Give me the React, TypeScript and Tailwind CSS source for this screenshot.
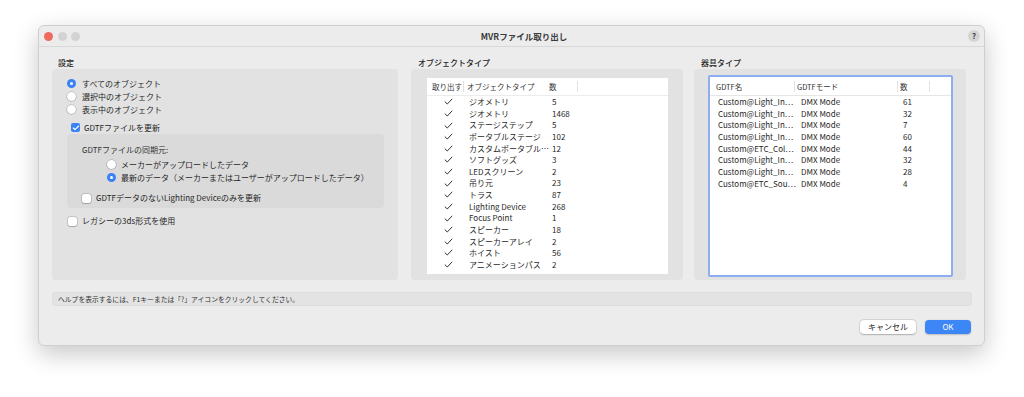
import { Check } from "lucide-react";

const objectTypes: [string, number][] = [
  ["ジオメトリ", 5],
  ["ジオメトリ", 1468],
  ["ステージステップ", 5],
  ["ポータブルステージ", 102],
  ["カスタムポータブル…", 12],
  ["ソフトグッズ", 3],
  ["LEDスクリーン", 2],
  ["吊り元", 23],
  ["トラス", 87],
  ["Lighting Device", 268],
  ["Focus Point", 1],
  ["スピーカー", 18],
  ["スピーカーアレイ", 2],
  ["ホイスト", 56],
  ["アニメーションパス", 2],
];

const fixtures: [string, string, number][] = [
  ["Custom@Light_In…", "DMX Mode", 61],
  ["Custom@Light_In…", "DMX Mode", 32],
  ["Custom@Light_In…", "DMX Mode", 7],
  ["Custom@Light_In…", "DMX Mode", 60],
  ["Custom@ETC_Col…", "DMX Mode", 44],
  ["Custom@Light_In…", "DMX Mode", 32],
  ["Custom@Light_In…", "DMX Mode", 28],
  ["Custom@ETC_Sou…", "DMX Mode", 4],
];

function Radio({ on }: { on?: boolean }) {
  return on ? (
    <span className="flex h-[9px] w-[9px] shrink-0 items-center justify-center rounded-full bg-[#3b82f6]">
      <span className="h-[3px] w-[3px] rounded-full bg-white" />
    </span>
  ) : (
    <span className="h-[9px] w-[9px] shrink-0 rounded-full bg-white shadow-[0_0_0_0.5px_rgba(0,0,0,0.25),0_0.5px_1px_rgba(0,0,0,0.15)]" />
  );
}

function Box({ on }: { on?: boolean }) {
  return on ? (
    <span className="flex h-[9px] w-[9px] shrink-0 items-center justify-center rounded-[2px] bg-[#3b82f6]">
      <Check size={8} strokeWidth={3.5} className="text-white" />
    </span>
  ) : (
    <span className="h-[9px] w-[9px] shrink-0 rounded-[2px] bg-white shadow-[0_0_0_0.5px_rgba(0,0,0,0.25),0_0.5px_1px_rgba(0,0,0,0.15)]" />
  );
}

function Tick() {
  return (
    <svg width="9" height="7" viewBox="0 0 9 7" fill="none">
      <path d="M0.8 3.6 L3.3 6 L8.2 0.8" stroke="#333" strokeWidth="1" />
    </svg>
  );
}

export default function App() {
  return (
    <div className="h-[397px] w-[1024px] overflow-hidden bg-white pt-[25px] pl-[38px] font-['Noto_Sans_CJK_JP',sans-serif] text-[8px] text-[#1f1f1f]">
      <div className="flex h-[321px] w-[947px] flex-col rounded-[6px] border border-[#cfcfcf] bg-[#ececec] shadow-[0_8px_24px_rgba(0,0,0,0.22)]">
        {/* Title bar */}
        <div className="relative flex h-[21px] shrink-0 items-center border-b border-[#d8d8d8]">
          <div className="flex items-center gap-[4.5px] pl-[5px]">
            <span className="h-[9px] w-[9px] rounded-full bg-[#ee6a5f]" />
            <span className="h-[9px] w-[9px] rounded-full bg-[#d3d3d3]" />
            <span className="h-[9px] w-[9px] rounded-full bg-[#d3d3d3]" />
          </div>
          <div className="flex-1 text-center text-[8.5px] font-bold text-[#3a3a3a]">MVRファイル取り出し</div>
          <div className="mr-[4px] flex h-[12px] w-[12px] items-center justify-center rounded-full bg-[#d4d4d4] text-[8px] font-bold text-[#444]">?</div>
        </div>

        {/* Body */}
        <div className="flex px-[13px] pt-[10px]">
          {/* 設定 */}
          <div className="w-[346px]">
            <div className="h-[12px] pl-[6px] leading-[12px] font-medium">設定</div>
            <div className="h-[211px] rounded-[4px] bg-[#e2e2e2] pt-[8px]">
              <div className="flex h-[13px] items-center gap-[6px] pl-[15px]"><Radio on />すべてのオブジェクト</div>
              <div className="flex h-[13px] items-center gap-[6px] pl-[15px]"><Radio />選択中のオブジェクト</div>
              <div className="flex h-[13px] items-center gap-[6px] pl-[15px]"><Radio />表示中のオブジェクト</div>
              <div className="mt-[5px] flex h-[13px] items-center gap-[4px] pl-[19px]"><Box on />GDTFファイルを更新</div>
              <div className="mr-[14px] ml-[15px] h-[74px] rounded-[4px] bg-[#dadada] pt-[10px]">
                <div className="h-[12px] pl-[15px] leading-[12px] text-[#333]">GDTFファイルの同期元:</div>
                <div className="mt-[2px] flex h-[13px] items-center gap-[5px] pl-[40px]"><Radio />メーカーがアップロードしたデータ</div>
                <div className="flex h-[13px] items-center gap-[5px] pl-[40px]"><Radio on />最新のデータ（メーカーまたはユーザーがアップロードしたデータ）</div>
                <div className="mt-[7.5px] flex h-[13px] items-center gap-[5px] pl-[15px]"><Box />GDTFデータのないLighting Deviceのみを更新</div>
              </div>
              <div className="mt-[6.5px] flex h-[13px] items-center gap-[5px] pl-[16px]"><Box />レガシーの3ds形式を使用</div>
            </div>
          </div>

          {/* オブジェクトタイプ */}
          <div className="ml-[13px] w-[272px]">
            <div className="h-[12px] pl-[7px] leading-[12px] font-medium">オブジェクトタイプ</div>
            <div className="h-[211px] rounded-[4px] bg-[#e2e2e2] pt-[9px] pl-[16px]">
              <div className="h-[196px] w-[241px] bg-white">
                <div className="flex h-[18px] items-center border-b border-[#ececec] text-[7.5px] text-[#333]">
                  <div className="w-[37px] border-r border-[#e2e2e2] pl-[5px] leading-[11px] whitespace-nowrap">取り出す</div>
                  <div className="w-[82px] pl-[3px] leading-[11px] whitespace-nowrap">オブジェクトタイプ</div>
                  <div className="w-[32px] border-r border-[#e2e2e2] pl-[3px] leading-[11px]">数</div>
                </div>
                {objectTypes.map(([name, n], i) => (
                  <div key={i} className="grid h-[11.64px] grid-cols-[42px_83px_1fr] items-center leading-[11.64px]">
                    <div className="flex justify-center"><Tick /></div>
                    <div className="whitespace-nowrap">{name}</div>
                    <div>{n}</div>
                  </div>
                ))}
              </div>
            </div>
          </div>

          {/* 器具タイプ */}
          <div className="ml-[11px] w-[272px]">
            <div className="h-[12px] pl-[7px] leading-[12px] font-medium">器具タイプ</div>
            <div className="h-[211px] rounded-[4px] bg-[#e2e2e2] pt-[6px] pl-[14px]">
              <div className="h-[202px] w-[245px] rounded-[2px] border-2 border-[#8cadf0] bg-white">
                <div className="flex h-[19px] items-center border-b border-[#e6e6e6] text-[7.5px] text-[#333]">
                  <div className="w-[85px] border-r border-[#e2e2e2] pl-[6px] leading-[11px]">GDTF名</div>
                  <div className="w-[103px] border-r border-[#e2e2e2] pl-[2px] leading-[11px]">GDTFモード</div>
                  <div className="w-[32px] border-r border-[#e2e2e2] pl-[2px] leading-[11px]">数</div>
                </div>
                {fixtures.map(([name, mode, n], i) => (
                  <div key={i} className="grid h-[11.67px] grid-cols-[85px_103px_1fr] items-center leading-[11.67px]">
                    <div className="pl-[8px] whitespace-nowrap">{name}</div>
                    <div className="pl-[6px]">{mode}</div>
                    <div className="pl-[5px]">{n}</div>
                  </div>
                ))}
              </div>
            </div>
          </div>
        </div>

        {/* Help bar */}
        <div className="mt-[12px] ml-[13px] flex h-[14px] w-[920px] items-center rounded-[3px] border border-[#dedede] bg-[#e3e3e3] pl-[5px] text-[6.8px] text-[#333]">
          ヘルプを表示するには、F1キーまたは「?」アイコンをクリックしてください。
        </div>

        {/* Buttons */}
        <div className="mt-[14px] flex justify-end gap-[9px] pr-[13px]">
          <button className="flex h-[14px] w-[56px] items-center justify-center rounded-[4px] bg-white text-[8px] text-[#262626] shadow-[0_0_0_0.5px_rgba(0,0,0,0.15),0_0.5px_1.5px_rgba(0,0,0,0.2)]">
            キャンセル
          </button>
          <button className="flex h-[14px] w-[46px] items-center justify-center rounded-[4px] bg-[#3d86f5] text-[8px] text-white shadow-[0_0.5px_1.5px_rgba(0,0,0,0.2)]">
            OK
          </button>
        </div>
      </div>
    </div>
  );
}
